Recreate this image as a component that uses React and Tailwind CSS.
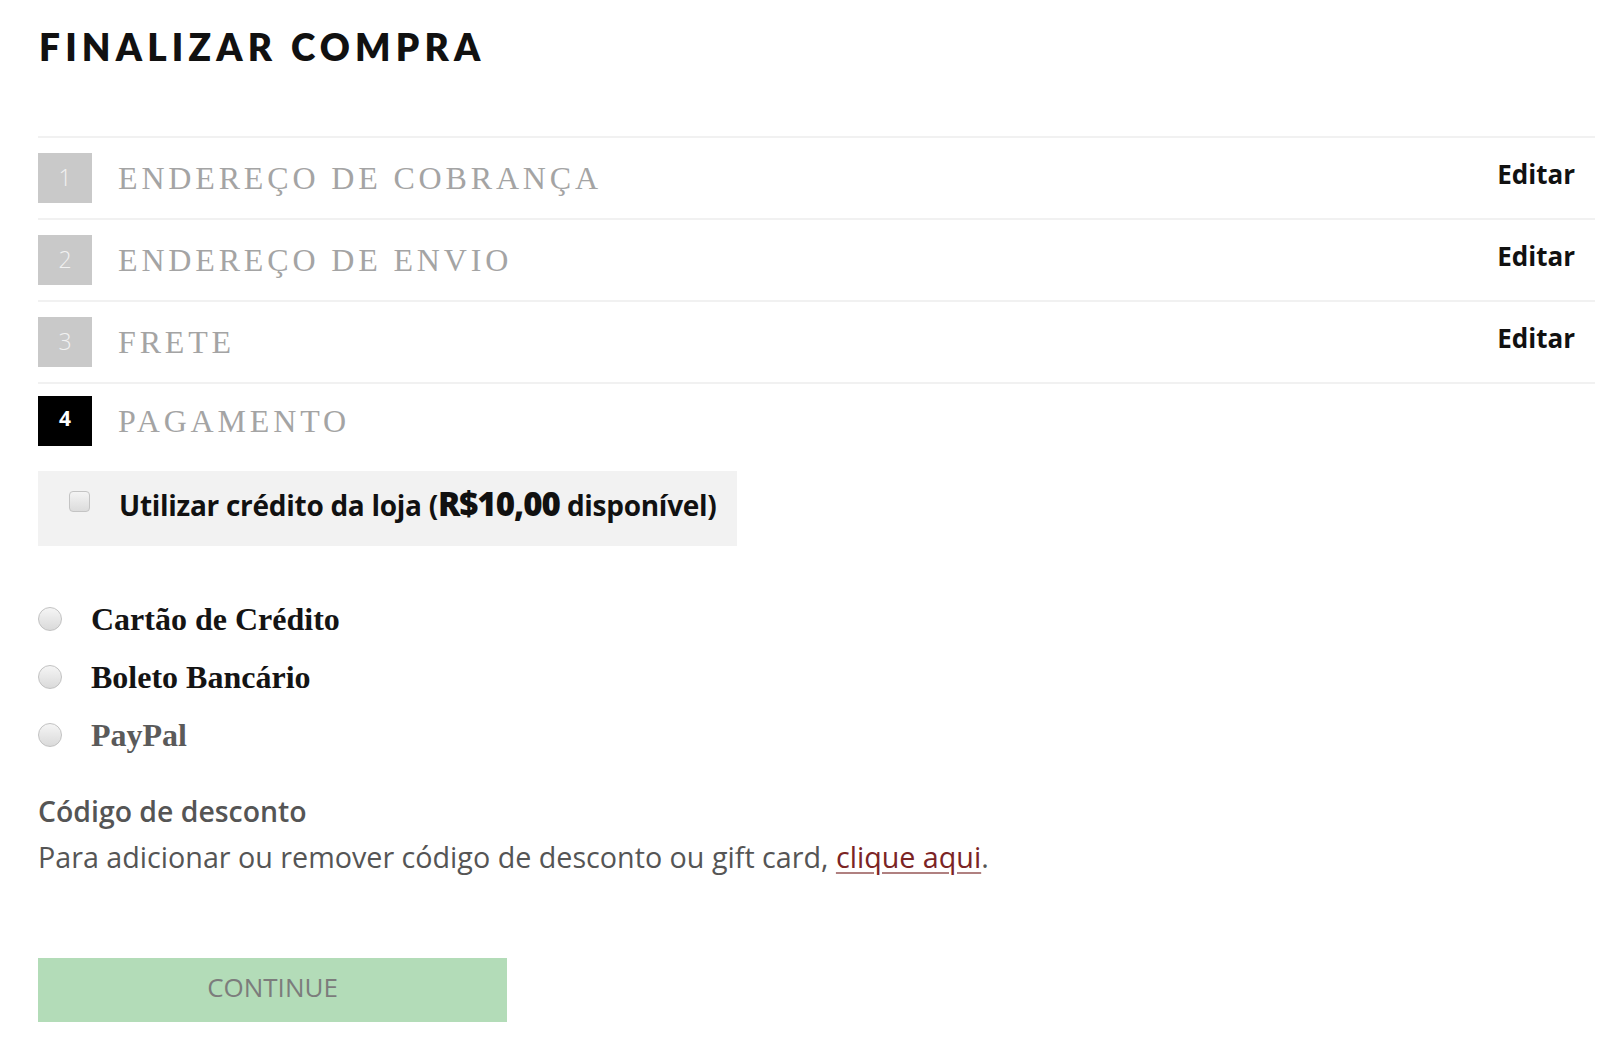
import React from 'react'

const steps = [
  { n: 1, title: 'ENDEREÇO DE COBRANÇA', edit: true },
  { n: 2, title: 'ENDEREÇO DE ENVIO', edit: true },
  { n: 3, title: 'FRETE', edit: true },
  { n: 4, title: 'PAGAMENTO', edit: false, active: true },
]

const methods = [
  { label: 'Cartão de Crédito', muted: false },
  { label: 'Boleto Bancário', muted: false },
  { label: 'PayPal', muted: true },
]

const serif = { fontFamily: '"Liberation Serif", "Times New Roman", serif' }
const sans = { fontFamily: '"Open Sans", "Liberation Sans", sans-serif' }

const App = () => {
  return (
    <div className="min-h-screen bg-white pl-[38px] pr-[25px] pt-[22px]" style={sans}>
      {/* Title */}
      <h1
        className="ml-[1px] text-[37px] font-extrabold leading-[50px] tracking-[0.14em] text-[#111]"
        style={{ fontFamily: 'Lato, "Open Sans", sans-serif' }}
      >
        FINALIZAR COMPRA
      </h1>

      {/* Steps */}
      <div className="mt-[64px]">
        {steps.map(step => (
          <div
            key={step.n}
            className={`flex items-center border-t-2 border-[#f1f1f1] ${step.active ? 'pt-[12px]' : 'py-[15px]'}`}
          >
            <div
              className={`flex h-[50px] w-[54px] shrink-0 justify-center pt-[7px] ${
                step.active ? 'bg-black text-white font-bold text-[21px]' : 'bg-[#c9c9c9] text-[#f2f2f2] font-light text-[23px]'
              }`}
            >
              {step.n}
            </div>
            <span
              className="ml-[26px] text-[32px] leading-none tracking-[0.12em] text-[#a4a4a4]"
              style={serif}
            >
              {step.title}
            </span>
            {step.edit && (
              <a href="#" className="ml-auto mr-[20px] -mt-[8px] text-[26px] font-bold text-[#111]">
                Editar
              </a>
            )}
          </div>
        ))}
      </div>

      {/* Store credit */}
      <div className="mt-[25px] flex h-[75px] w-[699px] items-start bg-[#f2f2f2] pl-[31px] pt-[20px]">
        <span className="h-[21px] w-[21px] shrink-0 rounded-[4px] border border-[#c4c4c4] bg-gradient-to-b from-[#f4f4f4] to-[#dcdcdc]" />
        <span className="ml-[29px] -mt-[12px] text-[28px] font-bold tracking-[-0.01em] text-[#111]">
          Utilizar crédito da loja (<span className="text-[33px] font-extrabold tracking-[-0.03em]">R$10,00</span> disponível)
        </span>
      </div>

      {/* Payment methods */}
      <div className="mt-[61px] flex flex-col gap-[34px]">
        {methods.map(m => (
          <label key={m.label} className="flex items-center">
            <span className="h-[24px] w-[24px] shrink-0 rounded-full border border-[#c2c2c2] bg-gradient-to-b from-[#f5f5f5] to-[#dadada]" />
            <span
              className={`ml-[29px] text-[32px] font-bold leading-[24px] ${m.muted ? 'text-[#5a5a5a]' : 'text-[#141414]'}`}
              style={serif}
            >
              {m.label}
            </span>
          </label>
        ))}
      </div>

      {/* Discount code */}
      <div className="mt-[42px] text-[28.7px] font-medium leading-[45px] text-[#555]">
        <p className="text-[28.4px] font-semibold">Código de desconto</p>
        <p>
          Para adicionar ou remover código de desconto ou gift card,{' '}
          <a href="#" className="text-[#7b2424] underline decoration-[#b08080] underline-offset-4">
            clique aqui
          </a>
          .
        </p>
      </div>

      {/* Continue */}
      <button className="mt-[79px] h-[64px] w-[469px] bg-[#b3dcb8] pb-[6px] text-[26px] text-[#7c7c7c]">
        CONTINUE
      </button>
    </div>
  )
}

export default App
